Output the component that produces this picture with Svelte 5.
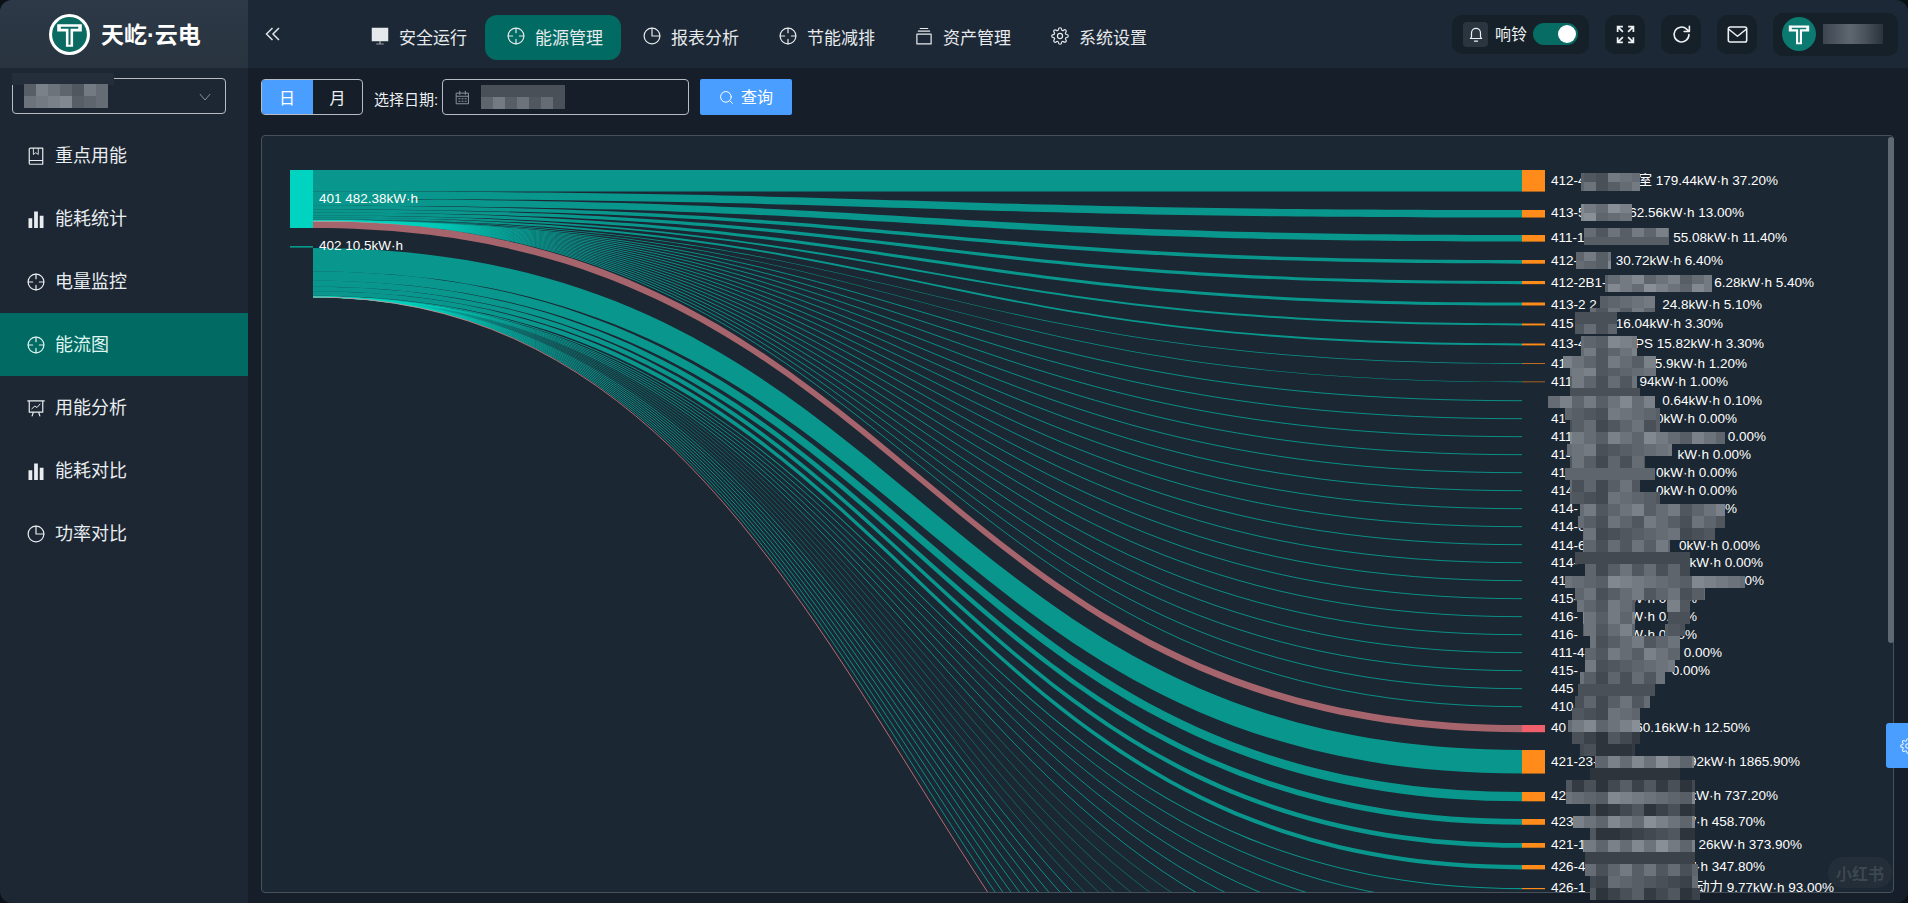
<script lang="ts">
	// Energy flow page: header nav, side menu, sankey chart
	const navItems = [
		{ label: "安全运行", icon: "monitor" },
		{ label: "能源管理", icon: "aim", active: true },
		{ label: "报表分析", icon: "pie" },
		{ label: "节能减排", icon: "aim" },
		{ label: "资产管理", icon: "box" },
		{ label: "系统设置", icon: "gear" },
	];

	const menuItems = [
		{ label: "重点用能", icon: "book" },
		{ label: "能耗统计", icon: "bars" },
		{ label: "电量监控", icon: "aim" },
		{ label: "能流图", icon: "aim", active: true },
		{ label: "用能分析", icon: "board" },
		{ label: "能耗对比", icon: "bars" },
		{ label: "功率对比", icon: "pie" },
	];

	// chart is drawn in page coordinates through the svg viewBox
	const X0 = 313;
	const X1 = 1522;
	const XM = (X0 + X1) / 2;
	const SCALE = 58 / 482.38;

	function band(y0: number, y1: number, h: number) {
		return `M${X0} ${y0}C${XM} ${y0} ${XM} ${y1} ${X1} ${y1}L${X1} ${y1 + h}C${XM} ${y1 + h} ${XM} ${y0 + h} ${X0} ${y0 + h}Z`;
	}
	function line(y0: number, y1: number) {
		return `M${X0} ${y0}C${XM} ${y0} ${XM} ${y1} ${X1} ${y1}`;
	}

	// [value, target top]
	const flow401 = [
		[179.44, 170], [62.56, 210], [55.08, 235], [30.72, 260], [26.28, 281],
		[24.8, 302.5], [16.04, 323.5], [15.82, 343.5], [5.9, 363.2], [4.94, 381.6],
	];
	const flow402 = [
		[195.92, 750], [77.4, 792], [48.16, 819], [39.26, 843], [36.52, 865], [9.77, 888],
	];

	function stack(list: number[][], start: number) {
		let y = start;
		return list.map(([value, top]) => {
			const h = value * SCALE;
			const path = band(y, top, h);
			y += h;
			return { path, top, h, end: y };
		});
	}

	const bands401 = stack(flow401, 170);
	const bands402 = stack(flow402, 248);
	const fan401Start = bands401[bands401.length - 1].end;
	const fan402Start = bands402[bands402.length - 1].end;
	const redStart = 220.8;

	const thinRows = Array.from({ length: 18 }, (_, i) => 400.7 + i * 18);
	const lowerRows = Array.from({ length: 21 }, (_, i) => 906 + i * 18);

	const labels = [
		[180, "412-4", "室 179.44kW·h 37.20%", 1778],
		[212, "413-5", "62.56kW·h 13.00%", 1744],
		[237, "411-1", "55.08kW·h 11.40%", 1787],
		[260, "412-", "30.72kW·h 6.40%", 1723],
		[282, "412-2B1-", "6.28kW·h 5.40%", 1814],
		[304, "413-2 2", "24.8kW·h 5.10%", 1762],
		[323, "415", "16.04kW·h 3.30%", 1723],
		[343, "413-4", "PS 15.82kW·h 3.30%", 1764],
		[363, "411", "5.9kW·h 1.20%", 1747],
		[381, "411-2", "94kW·h 1.00%", 1728],
		[400, "4", "0.64kW·h 0.10%", 1762],
		[418, "41", "0kW·h 0.00%", 1737],
		[436, "411-", "0.00%", 1766],
		[454, "414", "kW·h 0.00%", 1751],
		[472, "41", "0kW·h 0.00%", 1737],
		[490, "414-2", "0kW·h 0.00%", 1737],
		[508, "414-", "0.00%", 1737],
		[526, "414-6", "kW·h 0.0", 1705],
		[545, "414-6", "0kW·h 0.00%", 1760],
		[562, "414-", "kW·h 0.00%", 1763],
		[580, "41", "0.00%", 1764],
		[598, "415-", "W·h 0.00%", 1697],
		[616, "416-", "W·h 0.00%", 1697],
		[634, "416-", "W·h 0.00%", 1697],
		[652, "411-4", "0.00%", 1722],
		[670, "415-", "0.00%", 1710],
		[688, "445", "", 0],
		[706, "410", "", 0],
		[727, "40", "60.16kW·h 12.50%", 1750],
		[761, "421-23-", "92kW·h 1865.90%", 1800],
		[795, "42", "kW·h 737.20%", 1778],
		[821, "423", "W·h 458.70%", 1765],
		[844, "421-1", "26kW·h 373.90%", 1802],
		[866, "426-4", "W·h 347.80%", 1765],
		[887, "426-1", "动力 9.77kW·h 93.00%", 1834],
	] as [number, string, string, number][];

	// privacy mosaic over the names: [y, x0, x1, height, lightness boost]
	const mosaicRows = [
		[173, 1581, 1640, 9, 0], [182, 1581, 1640, 9, 0],
		[204, 1581, 1632, 9, 4], [213, 1581, 1632, 8, 3],
		[228, 1584, 1669, 9, 1], [237, 1584, 1669, 8, 2],
		[252, 1576, 1611, 9, 2], [261, 1576, 1611, 8, 2],
		[275, 1605, 1712, 9, 2], [284, 1605, 1712, 8, 3],
		[296, 1600, 1655, 12, 2],
		[308, 1590, 1655, 4, 1],
		[312, 1575, 1617, 12, 0], [324, 1575, 1617, 10, 0],
		[336, 1581, 1637, 12, 2], [348, 1581, 1637, 8, 1],
		[356, 1563, 1656, 12, 1], [368, 1570, 1656, 8, 1],
		[376, 1570, 1637, 12, 0], [388, 1570, 1640, 10, 0],
		[396, 1548, 1655, 12, 2], [408, 1565, 1660, 12, 0], [420, 1570, 1660, 12, -1],
		[432, 1570, 1725, 12, 2], [444, 1567, 1672, 12, 0], [456, 1570, 1645, 12, -1],
		[468, 1565, 1655, 12, 3], [480, 1570, 1640, 12, -1], [492, 1570, 1660, 12, -1],
		[504, 1580, 1725, 12, 1], [516, 1578, 1725, 12, 0], [528, 1583, 1715, 12, -1],
		[540, 1583, 1670, 12, 0], [552, 1575, 1690, 12, -1], [564, 1585, 1690, 12, -1],
		[576, 1565, 1745, 12, 2], [588, 1575, 1705, 12, 0],
		[600, 1577, 1635, 12, 1], [600, 1667, 1690, 12, 1],
		[612, 1583, 1635, 12, 2], [612, 1668, 1690, 12, 0],
		[624, 1583, 1635, 12, 1], [624, 1665, 1685, 12, 0],
		[636, 1590, 1680, 12, 0],
		[648, 1585, 1680, 12, 1], [660, 1585, 1675, 12, 0],
		[672, 1580, 1665, 12, -1], [684, 1578, 1655, 12, 0], [696, 1575, 1650, 12, -1],
		[708, 1572, 1640, 12, -1], [720, 1568, 1640, 12, 3], [732, 1572, 1640, 12, -4],
		[744, 1580, 1635, 12, -6],
		[756, 1595, 1694, 12, 3],
		[768, 1590, 1680, 12, -6],
		[780, 1566, 1695, 12, -4], [792, 1566, 1695, 12, 2], [804, 1590, 1695, 12, -5],
		[816, 1573, 1695, 12, 3], [828, 1590, 1695, 12, -5], [840, 1583, 1695, 12, 3],
		[852, 1585, 1695, 12, -2], [864, 1585, 1698, 12, 0], [876, 1590, 1698, 12, -2],
		[888, 1590, 1700, 12, -4],
	];

	function shade(i: number, j: number, boost: number) {
		const n = ((i * 7 + j * 13 + i * j * 3) % 7) + boost;
		const g = Math.max(52, Math.min(146, 80 + n * 7));
		return `rgb(${g - 6},${g},${g + 8})`;
	}

	const mosaic = mosaicRows.flatMap(([y, x0, x1, h, boost], i) => {
		const cells = [];
		let j = Math.floor(x0 / 12);
		for (let x = x0; x < x1; j++) {
			const next = Math.min((j + 1) * 12, x1);
			cells.push({ x, y, w: next - x, h, fill: shade(i, j, boost) });
			x = next;
		}
		return cells;
	});

	const selectBlocks = Array.from({ length: 7 }, (_, j) => j).flatMap((j) =>
		[0, 1].map((i) => ({ x: j * 12, y: i * 12, fill: shade(i + 2, j + 3, i === 0 ? 1 : 2) }))
	);
	const dateBlocks = Array.from({ length: 7 }, (_, j) => j).flatMap((j) =>
		[0, 1].map((i) => ({ x: j * 12, y: i * 12, fill: shade(i + 5, j + 1, 0) }))
	);
</script>

{#snippet icon(name: string)}
	<svg class="icon" viewBox="0 0 24 24" fill="none" stroke="currentColor" stroke-width="1.6" stroke-linecap="round" stroke-linejoin="round">
		{#if name === "aim"}
			<circle cx="12" cy="12" r="10.5" />
			<path d="M12 1.5v6M12 16.5v6M1.5 12h6M16.5 12h6" />
		{:else if name === "monitor"}
			<path d="M1 1h22v18H1z" fill="currentColor" stroke="none" />
			<path d="M11 19h2v3h-2zM7 22h10v1.4H7z" fill="currentColor" stroke="none" opacity="0.6" />
		{:else if name === "pie"}
			<circle cx="12" cy="12" r="10.5" />
			<path d="M12 1.5V12h10.5" />
		{:else if name === "box"}
			<path d="M2.5 9.5h19v13h-19zM7 2h10M4.5 5.5h15" />
		{:else if name === "gear"}
			<circle cx="12" cy="12" r="3.4" />
			<path d="M19.4 15a1.65 1.65 0 0 0 .33 1.82l.06.06a2 2 0 0 1 0 2.83 2 2 0 0 1-2.83 0l-.06-.06a1.65 1.65 0 0 0-1.82-.33 1.65 1.65 0 0 0-1 1.51V21a2 2 0 0 1-2 2 2 2 0 0 1-2-2v-.09A1.65 1.65 0 0 0 9 19.4a1.65 1.65 0 0 0-1.82.33l-.06.06a2 2 0 0 1-2.83 0 2 2 0 0 1 0-2.83l.06-.06a1.65 1.65 0 0 0 .33-1.82 1.65 1.65 0 0 0-1.51-1H3a2 2 0 0 1-2-2 2 2 0 0 1 2-2h.09A1.65 1.65 0 0 0 4.6 9a1.65 1.65 0 0 0-.33-1.82l-.06-.06a2 2 0 0 1 0-2.83 2 2 0 0 1 2.83 0l.06.06a1.65 1.65 0 0 0 1.82.33H9a1.65 1.65 0 0 0 1-1.51V3a2 2 0 0 1 2-2 2 2 0 0 1 2 2v.09a1.65 1.65 0 0 0 1 1.51 1.65 1.65 0 0 0 1.82-.33l.06-.06a2 2 0 0 1 2.83 0 2 2 0 0 1 0 2.83l-.06.06a1.65 1.65 0 0 0-.33 1.82V9a1.65 1.65 0 0 0 1.51 1H21a2 2 0 0 1 2 2 2 2 0 0 1-2 2h-.09a1.65 1.65 0 0 0-1.51 1z" />
		{:else if name === "book"}
			<path d="M3 19V3a1.5 1.5 0 0 1 1.5-1.5H21V23H4.5A1.5 1.5 0 0 1 3 21.5V19a1 1 0 0 1 1-1h17" />
			<path d="M8.5 2v8l3.2-2.4L15 10V2" stroke-width="1.2" />
		{:else if name === "bars"}
			<path d="M2 11h5v13H2zM9.5 2h5v22h-5zM17 7.5h5V24h-5z" fill="currentColor" stroke="none" />
		{:else if name === "board"}
			<path d="M1 2.5h22M3 2.5v15h18v-15M8.5 17.5l-1.6 5M15.5 17.5l1.6 5" />
			<path d="M6.5 13l4-3.6 2.8 2 4-4.6" stroke-width="1.3" />
		{:else if name === "bell"}
			<path d="M18 16V10.5a6 6 0 0 0-12 0V16l-1.5 2h15zM10 21.5h4" />
		{:else if name === "expand"}
			<path d="M3 9V3h6M3 3l6 6M21 9V3h-6M21 3l-6 6M3 15v6h6M3 21l6-6M21 15v6h-6M21 21l-6-6" stroke-width="2" stroke-linecap="butt" stroke-linejoin="miter" />
		{:else if name === "refresh"}
			<path d="M20.5 12a8.5 8.5 0 1 1-2.6-6.1l2.6 2.5M21 2.5v6h-6" stroke-width="1.8" />
		{:else if name === "mail"}
			<rect x="1.5" y="3.5" width="21" height="17" rx="2" stroke-width="1.8" />
			<path d="M2 6l10 8 10-8" stroke-width="1.8" />
		{:else if name === "search"}
			<circle cx="11" cy="11" r="8.5" />
			<path d="M17.5 17.5L21.5 21.5" />
		{:else if name === "calendar"}
			<path d="M2.5 5h19v17h-19zM2.5 10h19M7.5 2v5M16.5 2v5" />
			<path d="M6 14h2M11 14h2M16 14h2M6 18h2M11 18h2M16 18h2" />
		{/if}
	</svg>
{/snippet}

{#snippet tee(inner: string)}
	<path d="M8 10h24v7h-8.5v15h-7V17H8z" fill="#fff" />
	<path d="M11.5 13.5h17M20 13.5V30" stroke={inner} stroke-width="2" fill="none" />
{/snippet}

<div class="shell">
	<header class="header">
		<div class="brand">
			<svg class="brand-logo" viewBox="0 0 40 40">
				<circle cx="20" cy="20" r="18.5" fill="#0b6b63" stroke="#fff" stroke-width="3" />
				{@render tee("#0b6b63")}
			</svg>
			<span class="brand-name">天屹·云电</span>
		</div>

		<button class="collapse" aria-label="collapse">
			<svg viewBox="0 0 16 14" fill="none" stroke="currentColor" stroke-width="1.5">
				<path d="M7.5 1L1.5 7l6 6M14 1L8 7l6 6" />
			</svg>
		</button>

		<nav class="nav">
			{#each navItems as item}
				<div class="nav-item" class:active={item.active}>
					{@render icon(item.icon)}
					<span>{item.label}</span>
				</div>
			{/each}
		</nav>

		<div class="tools">
			<div class="tool bell">
				<span class="bell-box">{@render icon("bell")}</span>
				<span class="bell-text">响铃</span>
				<span class="switch"><span class="knob"></span></span>
			</div>
			<div class="tool square">{@render icon("expand")}</div>
			<div class="tool square">{@render icon("refresh")}</div>
			<div class="tool square">{@render icon("mail")}</div>
			<div class="tool user">
				<svg class="avatar" viewBox="0 0 40 40">
					<circle cx="20" cy="20" r="20" fill="#0b7a70" />
					{@render tee("#0b7a70")}
				</svg>
				<span class="user-name"></span>
			</div>
		</div>
	</header>

	<aside class="side">
		<div class="site-select">
			<span class="select-patch"></span>
			<svg class="select-mosaic" viewBox="0 0 84 24">
				{#each selectBlocks as b}
					<rect x={b.x} y={b.y} width="12" height="12" fill={b.fill} />
				{/each}
			</svg>
			<svg class="chevron" viewBox="0 0 14 9" fill="none" stroke="currentColor" stroke-width="1">
				<path d="M1 1l6 7 6-7" />
			</svg>
		</div>
		<ul class="menu">
			{#each menuItems as item}
				<li class:active={item.active}>
					{@render icon(item.icon)}
					<span>{item.label}</span>
				</li>
			{/each}
		</ul>
	</aside>

	<main class="main">
		<div class="toolbar">
			<div class="range">
				<span class="on">日</span>
				<span>月</span>
			</div>
			<span class="date-label">选择日期:</span>
			<div class="date-input">
				{@render icon("calendar")}
				<svg class="date-mosaic" viewBox="0 0 84 24">
					{#each dateBlocks as b}
						<rect x={b.x} y={b.y} width="12" height="12" fill={b.fill} />
					{/each}
				</svg>
			</div>
			<button class="query">
				{@render icon("search")}
				<span>查询</span>
			</button>
		</div>

		<section class="panel">
			<svg class="chart" viewBox="262 136 1631 756" preserveAspectRatio="none">
				<defs>
					<clipPath id="chart-clip">
						<rect x="262" y="136" width="1631" height="756" />
					</clipPath>
				</defs>

				<g clip-path="url(#chart-clip)">
					{#each bands401 as b}
						<path d={b.path} class="link" />
					{/each}
					{#each thinRows as y}
						<path d={line(fan401Start, y)} class="thin" />
					{/each}
					<path d={band(redStart, 725, 60.16 * SCALE)} class="link red" />

					{#each bands402 as b}
						<path d={b.path} class="link" />
					{/each}
					{#each lowerRows as y, i}
						<path
							d={line(fan402Start, y)}
							class="thin"
							class:faint={i > 4 && i < 11}
							class:pink={i === lowerRows.length - 1}
						/>
					{/each}

					<rect x="290" y="170" width="23" height="58" fill="#00d4c0" />
					<rect x="290" y="246.2" width="23" height="1.3" fill="#00b5a4" />

					{#each [...bands401, ...bands402] as b}
						<rect x={X1} y={b.top} width="23" height={b.h} fill="#ff8c1a" />
					{/each}
					<rect x={X1} y="725" width="23" height="7.2" fill="#f0606a" />

					<text x="319" y="202.5" class="label">401 482.38kW·h</text>
					<text x="319" y="250" class="label">402 10.5kW·h</text>

					{#each labels as [y, left, right, endX]}
						<text x="1551" y={y + 4.5} class="label">{left}</text>
						{#if right}
							<text x={endX} y={y + 4.5} class="label end">{right}</text>
						{/if}
					{/each}
				</g>

				<g>
					{#each mosaic as c}
						<rect x={c.x} y={c.y} width={c.w} height={c.h} fill={c.fill} />
					{/each}
				</g>
			</svg>
			<div class="scrollbar"></div>
		</section>
	</main>

	<div class="side-tab">{@render icon("gear")}</div>
	<div class="watermark">小红书</div>
</div>

<style>
	:global(body) {
		margin: 0;
		background: #0c1117;
	}

	.shell {
		position: relative;
		display: grid;
		grid-template-columns: 248px 1fr;
		grid-template-rows: 68px 1fr;
		width: 100vw;
		height: 100vh;
		overflow: hidden;
		border-radius: 12px;
		font-family: "Liberation Sans", "Noto Sans CJK SC", sans-serif;
		color: #eef1f3;
	}

	.icon {
		flex: none;
		width: 18px;
		height: 18px;
	}

	/* header */
	.header {
		grid-column: 1 / 3;
		display: flex;
		align-items: center;
		background: #1c2835;
	}

	.brand {
		flex: none;
		display: flex;
		align-items: center;
		gap: 11px;
		box-sizing: border-box;
		width: 248px;
		height: 100%;
		padding-left: 49px;
		background: linear-gradient(180deg, #2d3947, #28333f);
	}

	.brand-logo {
		width: 41px;
		height: 41px;
	}

	.brand-name {
		font-size: 23px;
		font-weight: 700;
		color: #fff;
		white-space: nowrap;
		padding-bottom: 2px;
	}

	.collapse {
		flex: none;
		width: 16px;
		height: 14px;
		margin: 0 0 0 17px;
		padding: 0;
		border: 0;
		background: none;
		color: #dfe4e8;
	}

	.collapse svg {
		display: block;
	}

	.nav {
		display: flex;
		margin: 7px 0 0 68px;
	}

	.nav-item {
		display: flex;
		align-items: center;
		gap: 10px;
		box-sizing: border-box;
		width: 136px;
		height: 45px;
		padding: 0 0 3px 22px;
		border-radius: 12px;
		font-size: 17px;
		color: #e6eaed;
	}

	.nav-item.active {
		background: #016a62;
	}

	.tools {
		display: flex;
		align-items: center;
		gap: 16px;
		margin-left: auto;
		margin-right: 10px;
	}

	.tool {
		display: flex;
		align-items: center;
		height: 39px;
		border-radius: 10px;
		background: #162029;
	}

	.bell {
		box-sizing: border-box;
		width: 137px;
		padding-left: 11px;
	}

	.bell-box {
		display: flex;
		align-items: center;
		justify-content: center;
		width: 25px;
		height: 25px;
		border-radius: 4px;
		background: #2a3540;
	}

	.bell-text {
		margin-left: 7px;
		font-size: 16px;
		padding-bottom: 2px;
	}

	.switch {
		position: relative;
		width: 45px;
		height: 22px;
		margin-left: 6px;
		border-radius: 11px;
		background: #066c64;
	}

	.knob {
		position: absolute;
		top: 2px;
		right: 2px;
		width: 18px;
		height: 18px;
		border-radius: 50%;
		background: #fff;
	}

	.square {
		justify-content: center;
		width: 40px;
	}

	.square .icon {
		width: 21px;
		height: 21px;
	}

	.user {
		box-sizing: border-box;
		width: 125px;
		height: 43px;
		padding-left: 9px;
	}

	.avatar {
		width: 34px;
		height: 34px;
	}

	.user-name {
		width: 60px;
		height: 20px;
		margin-left: 7px;
		background: linear-gradient(90deg, #3d4650, #5e666f 45%, #4a525b 70%, #2a333d);
	}

	/* side menu */
	.side {
		position: relative;
		background: #1c2733;
	}

	.site-select {
		position: relative;
		box-sizing: border-box;
		width: 214px;
		height: 36px;
		margin: 10px 0 10px 12px;
		border: 1px solid #b6bcc2;
		border-radius: 4px;
	}

	.select-patch {
		position: absolute;
		top: -6px;
		left: -1px;
		width: 102px;
		height: 12px;
		background: #232e3a;
	}

	.select-mosaic {
		position: absolute;
		top: 5px;
		left: 11px;
		width: 84px;
		height: 24px;
	}

	.chevron {
		position: absolute;
		top: 14px;
		right: 14px;
		width: 12px;
		height: 8px;
		color: #9aa2aa;
	}

	.menu {
		margin: 0;
		padding: 0;
		list-style: none;
	}

	.menu li {
		display: flex;
		align-items: center;
		gap: 10px;
		height: 63px;
		padding-left: 27px;
		font-size: 18px;
		color: #e9edf0;
	}

	.menu li span {
		padding-bottom: 4px;
	}

	.menu li.active {
		background: #016a62;
		color: #dff5f1;
	}

	/* main area */
	.main {
		display: flex;
		flex-direction: column;
		gap: 20px;
		min-width: 0;
		min-height: 0;
		padding: 11px 14px 10px 13px;
		background: #151e29;
	}

	.toolbar {
		flex: none;
		display: flex;
		align-items: center;
		height: 36px;
		font-size: 15px;
	}

	.range {
		display: flex;
		box-sizing: border-box;
		width: 102px;
		height: 36px;
		overflow: hidden;
		border: 1px solid #b6bcc2;
		border-radius: 4px;
	}

	.range span {
		flex: 1;
		display: flex;
		align-items: center;
		justify-content: center;
		font-size: 16px;
	}

	.range .on {
		flex: none;
		width: 52px;
		margin: -1px 0 -1px -1px;
		background: #4a9eff;
		color: #fff;
	}

	.date-label {
		margin-left: 11px;
		width: 68px;
		white-space: nowrap;
		font-size: 15px;
		padding-top: 2px;
	}

	.date-input {
		display: flex;
		align-items: center;
		box-sizing: border-box;
		width: 247px;
		height: 36px;
		padding-left: 12px;
		border: 1px solid #b6bcc2;
		border-radius: 4px;
		color: #8b939b;
	}

	.date-input .icon {
		width: 15px;
		height: 15px;
	}

	.date-mosaic {
		margin-left: 11px;
		width: 84px;
		height: 24px;
	}

	.query {
		display: flex;
		align-items: center;
		justify-content: center;
		gap: 7px;
		width: 92px;
		height: 36px;
		margin-left: 11px;
		padding: 0;
		border: 0;
		border-radius: 2px;
		background: #4a9eff;
		color: #fff;
		font: inherit;
		font-size: 16px;
	}

	.query span {
		padding-bottom: 2px;
	}

	.query .icon {
		width: 15px;
		height: 15px;
	}

	.panel {
		position: relative;
		flex: 1;
		min-height: 0;
		box-sizing: border-box;
		background: #1b2732;
		border: 1px solid #47515b;
		border-radius: 4px;
	}

	.chart {
		display: block;
		width: 100%;
		height: 100%;
		overflow: visible;
	}

	.link {
		fill: #00d4c0;
		fill-opacity: 0.64;
	}

	.link.red {
		fill: #f6888d;
		fill-opacity: 0.64;
	}

	.thin {
		fill: none;
		stroke: #00d4c0;
		stroke-width: 1;
		stroke-opacity: 0.6;
	}

	.thin.faint {
		stroke-opacity: 0.36;
	}

	.thin.pink {
		stroke: #f6888d;
		stroke-opacity: 0.7;
	}

	.label {
		font-size: 13.5px;
		fill: #fff;
	}

	.label.end {
		text-anchor: end;
	}

	.scrollbar {
		position: absolute;
		top: 1px;
		right: -1px;
		width: 6px;
		height: 506px;
		border-radius: 3px;
		background: #5f6973;
	}

	/* overlays */
	.side-tab {
		position: absolute;
		top: 723px;
		right: 0;
		display: flex;
		box-sizing: border-box;
		width: 22px;
		height: 45px;
		align-items: center;
		padding-left: 14px;
		overflow: hidden;
		border-radius: 3px 0 0 3px;
		background: #4a9eff;
		color: #e8f2ff;
	}

	.side-tab .icon {
		width: 16px;
		height: 16px;
	}

	.watermark {
		position: absolute;
		top: 857px;
		left: 1828px;
		display: flex;
		align-items: center;
		justify-content: center;
		width: 64px;
		height: 31px;
		border-radius: 15px;
		background: rgba(255, 255, 255, 0.035);
		font-size: 16px;
		font-weight: 700;
		color: rgba(255, 255, 255, 0.12);
	}
</style>
